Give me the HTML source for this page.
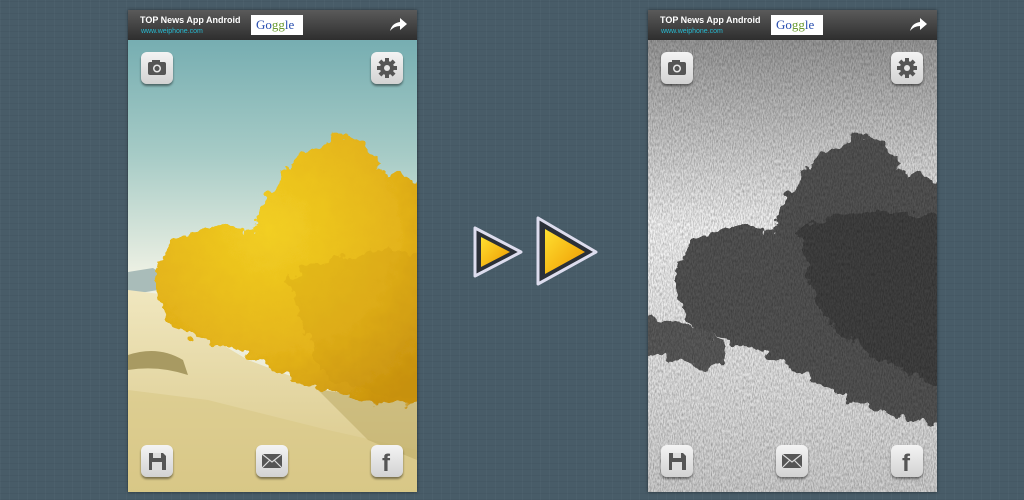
<!DOCTYPE html>
<html><head><style>
body{margin:0;width:1024px;height:500px;overflow:hidden;background:#485c68;position:relative;font-family:"Liberation Sans",sans-serif}
.bg{position:absolute;inset:0;background:
repeating-linear-gradient(90deg,rgba(255,255,255,.025) 0 1px,transparent 1px 9px),
repeating-linear-gradient(0deg,rgba(0,0,0,.04) 0 1px,transparent 1px 6px),#485c68}
.panel{position:absolute;top:10px;width:289px;height:482px;overflow:hidden;box-shadow:0 0 3px rgba(0,0,0,.5)}
.hdr{position:absolute;left:0;top:0;width:100%;height:30px;background:linear-gradient(#5a5a5a,#2e2e2e);z-index:2}
.t1{position:absolute;left:12px;top:5px;color:#fff;font-size:9px;font-weight:bold}
.t2{position:absolute;left:13px;top:18px;color:#25b9d0;font-size:7px}
.ad{position:absolute;left:123px;top:5px;width:52px;height:20px;background:#fff;font-family:"Liberation Serif",serif;font-size:13px;color:#2a4fb0;line-height:20px;text-indent:5px}
.ad b{color:#6a9a30;font-weight:normal}
.arr{position:absolute;right:9px;top:7px}
.btn{position:absolute;width:32px;height:32px;border-radius:6px;background:linear-gradient(#f4f4f4,#d2d2d2);box-shadow:0 2px 2px rgba(0,0,0,.45);z-index:2}
.btn svg{position:absolute;left:0;top:0}
</style></head><body><div class="bg"></div>
<svg width="0" height="0" style="position:absolute"><defs>
<filter id="rough" filterUnits="userSpaceOnUse" x="-50" y="-50" width="400" height="600"><feTurbulence type="fractalNoise" baseFrequency=".08" numOctaves="3" seed="3"/><feDisplacementMap in="SourceGraphic" scale="20" xChannelSelector="R" yChannelSelector="G"/></filter>
<filter id="n" filterUnits="userSpaceOnUse" x="0" y="0" width="289" height="482"><feTurbulence type="fractalNoise" baseFrequency=".9 .3" numOctaves="2"/><feColorMatrix values="0 0 0 0 0 0 0 0 0 0 0 0 0 0 0 0 0 0 -1.2 .8"/></filter>
</defs></svg>

<!-- left panel -->
<div class="panel" style="left:128px">
<svg width="289" height="482" style="position:absolute;left:0;top:0">
<defs>
<linearGradient id="sky" x1="0" y1="0" x2="0" y2="1"><stop offset="0" stop-color="#6aa6ac"/><stop offset=".3" stop-color="#a6cbc6"/><stop offset=".55" stop-color="#eef1e4"/><stop offset="1" stop-color="#efe9cc"/></linearGradient>
<linearGradient id="sand" x1="0" y1="0" x2="0" y2="1"><stop offset="0" stop-color="#f0e7bf"/><stop offset="1" stop-color="#d8c686"/></linearGradient>
<radialGradient id="tree" cx=".4" cy=".35" r=".75"><stop offset="0" stop-color="#f2cf22"/><stop offset=".6" stop-color="#e4b41a"/><stop offset="1" stop-color="#c9920e"/></radialGradient>
</defs>
<rect width="289" height="482" fill="url(#sky)"/>
<path d="M0 262 L25 258 L40 268 L30 280 L0 285Z" fill="#a9bcb9"/>
<path d="M0 280 L40 285 L70 320 L120 350 L200 380 L289 385 L289 482 L0 482Z" fill="url(#sand)"/>
<path d="M0 345 Q30 335 55 350 L60 365 Q30 355 0 360Z" fill="#a89a62"/>
<path d="M0 380 L80 390 L200 420 L289 440 L289 482 L0 482Z" fill="#d9c887" opacity=".6"/>
<path d="M190 380 L289 390 L289 450 L240 430Z" fill="#b8a560" opacity=".5"/>
<g transform="translate(-10 -10)">
<path filter="url(#rough)" d="M40 265 Q50 235 85 230 Q110 220 135 235 Q140 205 155 190 Q170 160 205 145 Q220 128 232 138 Q255 150 265 170 Q285 175 320 190 L320 405 Q260 408 220 395 Q185 388 160 370 Q130 355 110 345 Q70 340 50 320 Q35 295 40 265Z" fill="url(#tree)"/>
<path filter="url(#rough)" d="M170 280 Q230 240 320 255 L320 400 Q240 395 200 370Z" fill="#c38e0c" opacity=".2"/>
</g>
</svg>
<div class="hdr"><div class="t1">TOP News App Android</div><div class="t2">www.weiphone.com</div><div class="ad">Go<b>gg</b>le</div>
<svg class="arr" width="20" height="16"><path d="M2 14 Q4 6 12 5 L12 1 L19 7 L12 13 L12 9 Q6 9 2 14Z" fill="#fff"/></svg></div>
<div class="btn" style="left:13px;top:42px"><svg width="32" height="32"><rect x="7" y="10" width="18" height="13" rx="2" fill="#555"/><rect x="11" y="8" width="8" height="3" fill="#555"/><circle cx="16" cy="16.5" r="4" fill="#e8e8e8"/><circle cx="16" cy="16.5" r="2.5" fill="#555"/></svg></div>
<div class="btn" style="left:243px;top:42px"><svg width="32" height="32"><g transform="translate(16 16)" fill="#555"><circle r="7"/><rect x="-2" y="-10" width="4" height="20"/><rect x="-10" y="-2" width="20" height="4"/><g transform="rotate(45)"><rect x="-2" y="-10" width="4" height="20"/><rect x="-10" y="-2" width="20" height="4"/></g></g><circle cx="16" cy="16" r="3" fill="#e5e5e5"/></svg></div>
<div class="btn" style="left:13px;top:435px"><svg width="32" height="32"><path d="M8 8 H22 L25 11 V25 H8Z" fill="#555"/><rect x="12" y="8" width="8" height="5" fill="#ddd"/><rect x="11" y="17" width="10" height="8" fill="#ddd"/></svg></div>
<div class="btn" style="left:128px;top:435px"><svg width="32" height="32"><rect x="6" y="9" width="20" height="14" fill="#555"/><path d="M6 9 L16 17 L26 9 M6 23 L14 15 M26 23 L18 15" stroke="#ddd" stroke-width="1.2" fill="none"/></svg></div>
<div class="btn" style="left:243px;top:435px"><svg width="32" height="32"><text x="11" y="26" font-family="Liberation Sans" font-weight="bold" font-size="24" fill="#555">f</text></svg></div>
</div>

<!-- arrows -->
<svg width="140" height="80" style="position:absolute;left:465px;top:210px">
<defs><linearGradient id="y" x1="0" y1="0" x2="1" y2="1"><stop offset="0" stop-color="#ffe030"/><stop offset="1" stop-color="#ee9800"/></linearGradient></defs>
<path d="M10 18 L10 66 L56 42Z" fill="#2b3038" stroke="#dde" stroke-width="3" stroke-linejoin="round"/>
<path d="M16 27 L16 57 L45 42Z" fill="url(#y)"/>
<path d="M73 8 L73 74 L131 42Z" fill="#2b3038" stroke="#dde" stroke-width="3" stroke-linejoin="round"/>
<path d="M80 19 L80 64 L120 42Z" fill="url(#y)"/>
</svg>

<!-- right panel -->
<div class="panel" style="left:648px">
<svg width="289" height="482" style="position:absolute;left:0;top:0">
<defs>
<linearGradient id="g" x1="0" y1="0" x2="0" y2="1"><stop offset="0" stop-color="#8a8a8a"/><stop offset=".25" stop-color="#c4c4c4"/><stop offset=".45" stop-color="#f4f4f4"/><stop offset=".7" stop-color="#e6e6e6"/><stop offset="1" stop-color="#cfcfcf"/></linearGradient>
</defs>
<rect width="289" height="482" fill="url(#g)"/>
<g transform="translate(-10 -10)">
<path filter="url(#rough)" d="M0 320 Q50 315 80 340 Q100 365 70 370 Q40 355 0 355Z" fill="#5a5a5a"/>
<path filter="url(#rough)" d="M40 265 Q50 235 85 230 Q110 220 135 235 Q140 205 155 190 Q170 160 205 145 Q220 128 232 138 Q255 150 265 170 Q285 175 320 190 L320 425 Q260 420 220 405 Q185 388 160 370 Q130 355 110 345 Q70 340 50 320 Q35 295 40 265Z" fill="#525252"/>
<path filter="url(#rough)" d="M160 230 Q230 200 320 220 L320 390 Q240 370 180 310Z" fill="#404040"/>
</g>
<rect width="289" height="482" filter="url(#n)" opacity=".45"/>
</svg>
<div class="hdr"><div class="t1">TOP News App Android</div><div class="t2">www.weiphone.com</div><div class="ad">Go<b>gg</b>le</div>
<svg class="arr" width="20" height="16"><path d="M2 14 Q4 6 12 5 L12 1 L19 7 L12 13 L12 9 Q6 9 2 14Z" fill="#fff"/></svg></div>
<div class="btn" style="left:13px;top:42px"><svg width="32" height="32"><rect x="7" y="10" width="18" height="13" rx="2" fill="#555"/><rect x="11" y="8" width="8" height="3" fill="#555"/><circle cx="16" cy="16.5" r="4" fill="#e8e8e8"/><circle cx="16" cy="16.5" r="2.5" fill="#555"/></svg></div>
<div class="btn" style="left:243px;top:42px"><svg width="32" height="32"><g transform="translate(16 16)" fill="#555"><circle r="7"/><rect x="-2" y="-10" width="4" height="20"/><rect x="-10" y="-2" width="20" height="4"/><g transform="rotate(45)"><rect x="-2" y="-10" width="4" height="20"/><rect x="-10" y="-2" width="20" height="4"/></g></g><circle cx="16" cy="16" r="3" fill="#e5e5e5"/></svg></div>
<div class="btn" style="left:13px;top:435px"><svg width="32" height="32"><path d="M8 8 H22 L25 11 V25 H8Z" fill="#555"/><rect x="12" y="8" width="8" height="5" fill="#ddd"/><rect x="11" y="17" width="10" height="8" fill="#ddd"/></svg></div>
<div class="btn" style="left:128px;top:435px"><svg width="32" height="32"><rect x="6" y="9" width="20" height="14" fill="#555"/><path d="M6 9 L16 17 L26 9 M6 23 L14 15 M26 23 L18 15" stroke="#ddd" stroke-width="1.2" fill="none"/></svg></div>
<div class="btn" style="left:243px;top:435px"><svg width="32" height="32"><text x="11" y="26" font-family="Liberation Sans" font-weight="bold" font-size="24" fill="#555">f</text></svg></div>
</div>
</body></html>
